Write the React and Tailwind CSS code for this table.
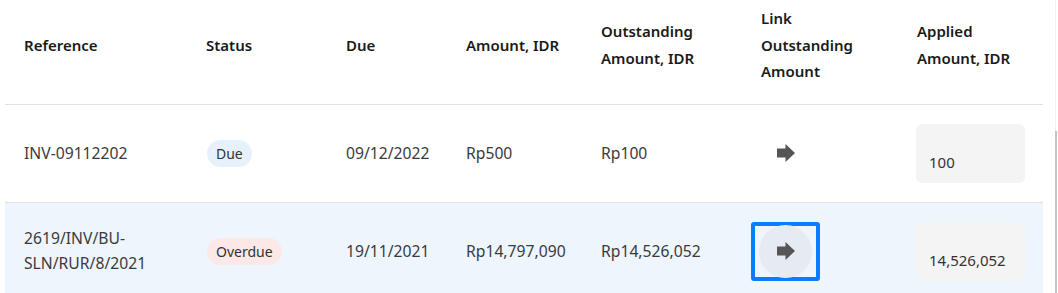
import React from "react";

const cols = [183, 140, 120, 135, 160, 156, 144];

const rows = [
    { ref: "INV-09112202", status: "Due", due: "09/12/2022", amount: "Rp500", outstanding: "Rp100", applied: "100", active: false },
    { ref: "2619/INV/BU-SLN/RUR/8/2021", status: "Overdue", due: "19/11/2021", amount: "Rp14,797,090", outstanding: "Rp14,526,052", applied: "14,526,052", active: true },
];

const ArrowIcon = () => (
    <svg width="18" height="18" viewBox="0 0 18 18" className="block">
        <path d="M0 4.5 H8.5 V0 L18 9 L8.5 18 V13.5 H0 Z" fill="#555555" />
    </svg>
);

const StatusBadge = ({ status }) => (
    <span
        className={
            status === "Due"
                ? "ml-[1px] inline-flex h-[27px] items-center rounded-full bg-[#e7f1fd] px-[9px] text-[14px] text-[#333]"
                : "ml-[1px] inline-flex h-[27px] items-center rounded-full bg-[#fce8e6] px-[9px] text-[14px] text-[#333]"
        }
    >
        {status}
    </span>
);

const LinkButton = ({ active }) => (
    <span
        className={
            active
                ? "-ml-[10px] inline-flex h-[59px] w-[69px] items-center justify-center rounded-[3px] border-4 border-[#0a7cff]"
                : "-ml-[10px] inline-flex h-[59px] w-[69px] items-center justify-center rounded-[3px] border-4 border-transparent"
        }
    >
        <span className={active ? "flex h-[53px] w-[53px] shrink-0 items-center justify-center rounded-full bg-[#e6ebf1]" : "flex h-[53px] w-[53px] shrink-0 items-center justify-center rounded-full"}>
            <ArrowIcon />
        </span>
    </span>
);

const AppliedInput = ({ value }) => (
    <div className="-ml-[1px] flex h-[59px] w-[109px] items-end rounded-[6px] bg-[#f4f4f4] px-[13px] pb-[8px] text-[15px] text-[#333]">
        {value}
    </div>
);

export default function App() {
    const th = "pl-[18px] pr-[12px] pb-[14px] text-left align-middle text-[15px] font-semibold leading-[26.5px] text-[#1a1a1a]";
    const td = "pl-[18px] pr-[12px] align-middle text-[15.7px] leading-[25px] text-[#3b3b3b]";

    return (
        <div className="flex h-[293px] w-[1058px] overflow-hidden bg-white" style={{ fontFamily: '"Noto Sans", "Open Sans", sans-serif' }}>
            <div className="ml-[5px] w-[1038px]">
                <table className="w-[1038px] table-fixed border-collapse">
                    <colgroup>
                        {cols.map((w, i) => (
                            <col key={i} style={{ width: w }} />
                        ))}
                    </colgroup>
                    <thead>
                        <tr className="h-[104px] border-b border-[#e2e2e2]">
                            <th className={th + " pl-[19px]"}>Reference</th>
                            <th className={th}>Status</th>
                            <th className={th}>Due</th>
                            <th className={th}>Amount, IDR</th>
                            <th className={th}>Outstanding Amount, IDR</th>
                            <th className={th}>
                                Link
                                <br />
                                Outstanding Amount
                            </th>
                            <th className={th}>Applied Amount, IDR</th>
                        </tr>
                    </thead>
                    <tbody>
                        {rows.map((r) => (
                            <tr key={r.ref} className={r.active ? "h-[98px] border-b border-[#e2e2e2] bg-[#eef5fd]" : "h-[98px] border-b border-[#e2e2e2]"}>
                                <td className={td + " pl-[19px]"}>{r.ref}</td>
                                <td className={td}>
                                    <StatusBadge status={r.status} />
                                </td>
                                <td className={td}>{r.due}</td>
                                <td className={td}>{r.amount}</td>
                                <td className={td}>{r.outstanding}</td>
                                <td className={td}>
                                    <LinkButton active={r.active} />
                                </td>
                                <td className={td}>
                                    <AppliedInput value={r.applied} />
                                </td>
                            </tr>
                        ))}
                    </tbody>
                </table>
            </div>
            <div className="flex-1" />
            <div className="flex w-[3px] flex-col">
                <div className="h-[131px] border-l border-[#f0f0f0]" />
                <div className="flex-1 border-l-2 border-[#c4c4c4]" />
            </div>
        </div>
    );
}
